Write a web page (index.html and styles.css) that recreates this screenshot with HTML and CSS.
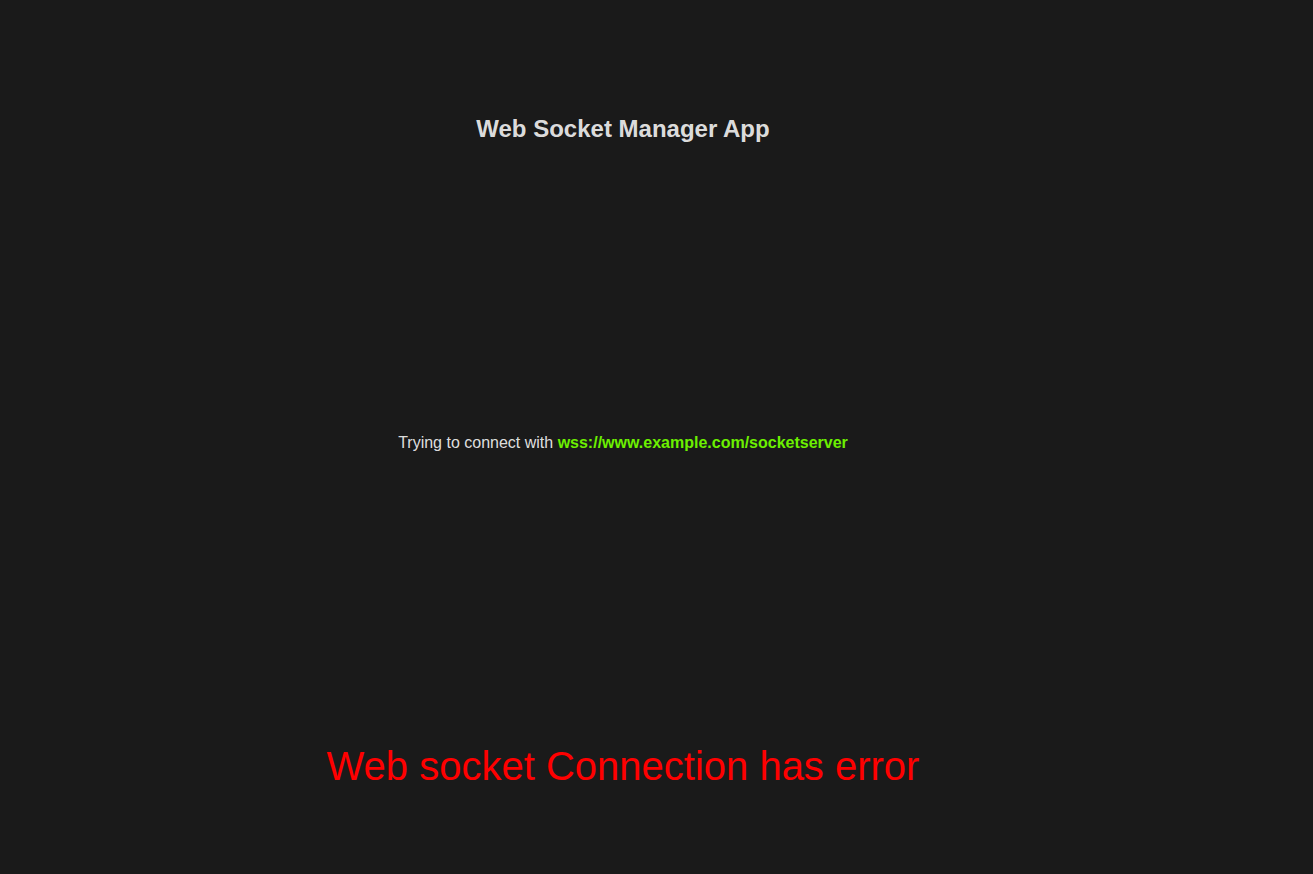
FILE: index.html
```html
<!DOCTYPE html>
<html lang="en">
<head>
<meta charset="utf-8">
<title>Web Socket Manager App</title>
<link rel="stylesheet" href="styles.css">
</head>
<body>
<main class="app">
  <h1 class="title">Web Socket Manager App</h1>
  <p class="status">Trying to connect with <strong class="url">wss://www.example.com/socketserver</strong></p>
  <p class="error">Web socket Connection has error</p>
</main>
</body>
</html>
```

FILE: styles.css
```css
html, body {
  margin: 0;
  padding: 0;
  background: #1a1a1a;
}

body {
  font-family: "Liberation Sans", Arial, sans-serif;
  color: rgba(255, 255, 255, 0.87);
  min-height: 100vh;
}

.app {
  display: flex;
  flex-direction: column;
  align-items: center;
  text-align: center;
  padding: 115px 67px 0 0;
}

.title {
  margin: 0;
  font-size: 24px;
  line-height: 28px;
  font-weight: bold;
}

.status {
  margin: 291px 0 0;
  font-size: 16px;
  line-height: 18px;
}

.url {
  color: #6cf000;
  font-weight: bold;
}

.error {
  margin: 291px 0 0;
  font-size: 40px;
  line-height: 46px;
  color: #ff0000;
}
```
